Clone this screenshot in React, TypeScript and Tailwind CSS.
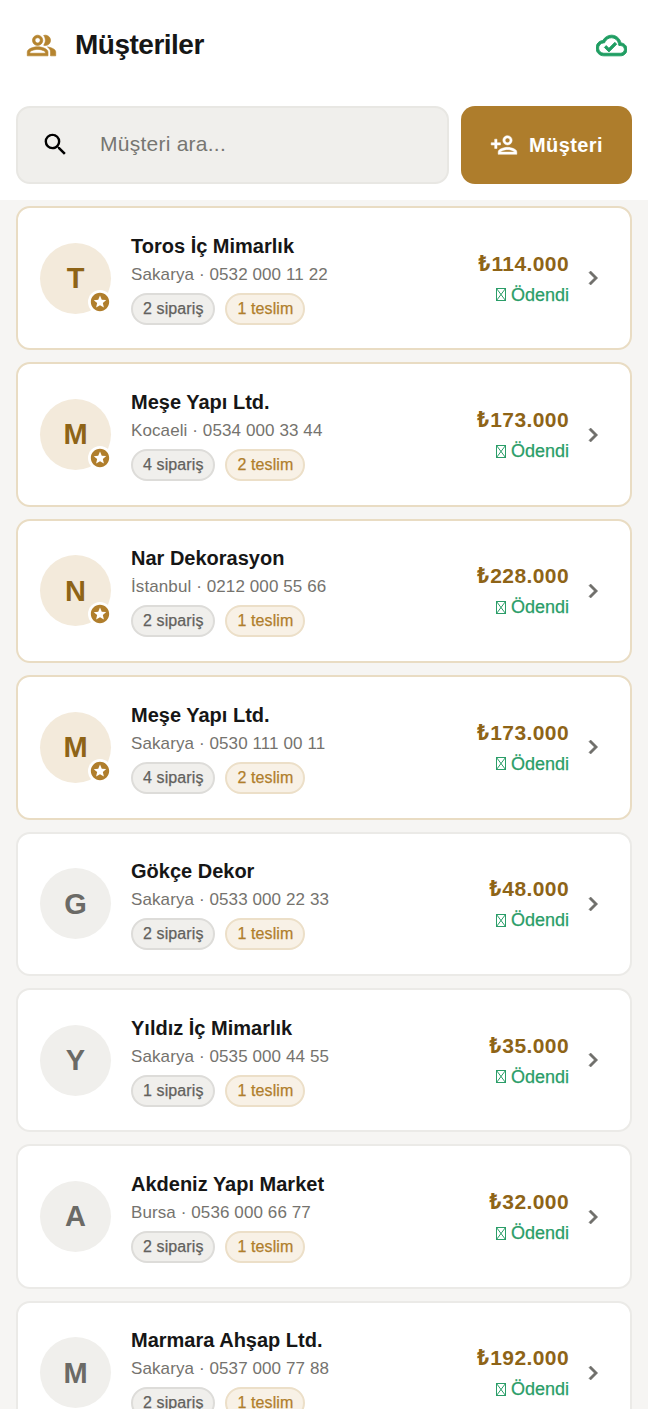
import React from "react";
import { MdSearch, MdStars } from "react-icons/md";

const rows = [
  ["T", "Toros İç Mimarlık", "Sakarya · 0532 000 11 22", "2 sipariş", "1 teslim", "₺114.000", true],
  ["M", "Meşe Yapı Ltd.", "Kocaeli · 0534 000 33 44", "4 sipariş", "2 teslim", "₺173.000", true],
  ["N", "Nar Dekorasyon", "İstanbul · 0212 000 55 66", "2 sipariş", "1 teslim", "₺228.000", true],
  ["M", "Meşe Yapı Ltd.", "Sakarya · 0530 111 00 11", "4 sipariş", "2 teslim", "₺173.000", true],
  ["G", "Gökçe Dekor", "Sakarya · 0533 000 22 33", "2 sipariş", "1 teslim", "₺48.000", false],
  ["Y", "Yıldız İç Mimarlık", "Sakarya · 0535 000 44 55", "1 sipariş", "1 teslim", "₺35.000", false],
  ["A", "Akdeniz Yapı Market", "Bursa · 0536 000 66 77", "2 sipariş", "1 teslim", "₺32.000", false],
  ["M", "Marmara Ahşap Ltd.", "Sakarya · 0537 000 77 88", "2 sipariş", "1 teslim", "₺192.000", false],
] as const;

function Tofu() {
  return (
    <svg width="10" height="13" viewBox="0 0 10 13" fill="none" stroke="currentColor" strokeWidth="1" className="shrink-0">
      <rect x="0.5" y="0.5" width="9" height="12" />
      <path d="M0.5 0.5L9.5 12.5M9.5 0.5L0.5 12.5" />
    </svg>
  );
}

function PeopleIcon() {
  return (
    <svg width="31" height="31" viewBox="0 0 24 24" fill="currentColor" stroke="currentColor" strokeWidth="0.5" className="shrink-0 text-[#b5842f]">
      <path d="M16.67 13.13C18.04 14.06 19 15.32 19 17v3h4v-3c0-2.18-3.57-3.47-6.33-3.87z" />
      <path d="M15 12c2.21 0 4-1.79 4-4s-1.79-4-4-4c-.47 0-.91.1-1.33.24C14.5 5.27 15 6.58 15 8s-.5 2.73-1.33 3.76c.42.14.86.24 1.33.24z" />
      <path d="M9 12c2.21 0 4-1.79 4-4s-1.79-4-4-4-4 1.79-4 4 1.79 4 4 4zm0-6c1.1 0 2 .9 2 2s-.9 2-2 2-2-.9-2-2 .9-2 2-2z" />
      <path d="M9 13c-2.67 0-8 1.34-8 4v3h16v-3c0-2.66-5.33-4-8-4zm6 5H3v-.99C3.2 16.29 6.3 15 9 15s5.8 1.29 6 2v1z" />
    </svg>
  );
}

function CloudIcon() {
  return (
    <svg width="31" height="31" viewBox="0 0 24 24" fill="currentColor" stroke="currentColor" strokeWidth="0.7" className="shrink-0 text-[#1f9d62]">
      <path d="M19.35 10.04C18.67 6.59 15.64 4 12 4 9.11 4 6.6 5.64 5.35 8.04 2.34 8.36 0 10.91 0 14c0 3.31 2.69 6 6 6h13c2.76 0 5-2.24 5-5 0-2.64-2.05-4.78-4.65-4.96zM19 18H6c-2.21 0-4-1.79-4-4 0-2.05 1.53-3.76 3.56-3.97l1.07-.11.5-.95C8.08 7.14 9.94 6 12 6c2.62 0 4.88 1.86 5.39 4.43l.3 1.5 1.53.11c1.56.1 2.78 1.41 2.78 2.96 0 1.65-1.35 3-3 3zM10 14.17l-2.09-2.09L6.5 13.5 10 17l6.01-6.01-1.41-1.41z" />
    </svg>
  );
}

function PersonAddIcon() {
  return (
    <svg width="28" height="28" viewBox="0 0 24 24" fill="currentColor" stroke="currentColor" strokeWidth="0.4" className="shrink-0">
      <path d="M15 6c1.1 0 2 .9 2 2s-.9 2-2 2-2-.9-2-2 .9-2 2-2m0 10c2.7 0 5.8 1.29 6 2H9c.23-.72 3.31-2 6-2M15 4c-2.21 0-4 1.79-4 4s1.79 4 4 4 4-1.79 4-4-1.79-4-4-4zm0 10c-2.67 0-8 1.34-8 4v2h16v-2c0-2.66-5.33-4-8-4z" />
      <path d="M6 10V7H4v3H1v2h3v3h2v-3h3v-2H6z" />
    </svg>
  );
}

function Chevron() {
  return (
    <svg width="28" height="28" viewBox="0 0 24 24" fill="currentColor" stroke="currentColor" strokeWidth="0.5" className="-mr-[28px] ml-[10px] shrink-0 text-[#6f6e6a]">
      <path d="M10 6 8.59 7.41 13.17 12l-4.58 4.59L10 18l6-6z" />
    </svg>
  );
}

function Card({ r }: { r: (typeof rows)[number] }) {
  const [letter, name, sub, orders, deliv, amount, vip] = r;
  return (
    <div className={`flex h-[144.4px] shrink-0 items-center rounded-[14px] border-2 bg-white pl-[22px] pr-[51px] ${vip ? "border-[#e9dcc3]" : "border-[#ebeae7]"}`}>
      <div className={`relative flex h-[71px] w-[71px] shrink-0 items-center justify-center rounded-full pt-[1px] text-[29px] font-bold ${vip ? "bg-[#f3eadb] text-[#8e6417]" : "bg-[#f0efec] text-[#6b6a66]"}`}>
        {letter}
        {vip && (
          <span className="absolute -right-[1px] bottom-0 flex h-[24px] w-[24px] items-center justify-center rounded-full bg-white">
            <MdStars size={22} className="text-[#b07e2c]" />
          </span>
        )}
      </div>
      <div className="ml-[20px] flex min-w-0 flex-1 flex-col items-start">
        <div className="text-[20px] leading-[28px] font-bold text-[#161616]">{name}</div>
        <div className="text-[17px] leading-[30px] tracking-[0.1px] text-[#75736e]">{sub}</div>
        <div className="mt-[3px] flex gap-[10px]">
          <span className="flex h-[32px] items-center rounded-full border-2 border-[#dddcd9] bg-[#f0efec] px-[10px] text-[16px] tracking-[0.1px] text-[#62615d] [-webkit-text-stroke:0.25px]">{orders}</span>
          <span className="flex h-[32px] items-center rounded-full border-2 border-[#ecdfc8] bg-[#f8f1e6] px-[10px] text-[16px] tracking-[0.1px] text-[#b07e2c] [-webkit-text-stroke:0.25px]">{deliv}</span>
        </div>
      </div>
      <div className="flex flex-col items-end">
        <div className="text-[21px] leading-[28px] font-bold tracking-[0.4px] text-[#8e6417]">{amount}</div>
        <div className="mt-[5px] flex items-center gap-[5px] text-[18px] leading-[24px] text-[#2a9d68] [-webkit-text-stroke:0.25px]">
          <Tofu />
          Ödendi
        </div>
      </div>
      <Chevron />
    </div>
  );
}

export default function App() {
  return (
    <div className="flex h-[1409px] w-[648px] flex-col overflow-hidden bg-[#f6f5f3] font-['Liberation_Sans','Inter',sans-serif]">
      <div className="shrink-0 bg-white px-4 pb-[16px]">
        <div className="flex h-[90px] items-center justify-between pl-[10px] pr-[5px]">
          <div className="flex items-center gap-[18px]">
            <PeopleIcon />
            <div className="text-[28px] font-bold tracking-[-0.5px] text-[#161616]">Müşteriler</div>
          </div>
          <CloudIcon />
        </div>
        <div className="flex gap-[12px] pt-[16px]">
          <div className="flex h-[78px] flex-1 items-center rounded-[14px] border-2 border-[#e8e7e3] bg-[#f0efec] pb-[2px] pl-[23px]">
            <MdSearch size={29} className="text-black" />
            <span className="ml-[30px] text-[21px] tracking-[0.25px] text-[#777671]">Müşteri ara...</span>
          </div>
          <div className="flex h-[78px] w-[171px] items-center justify-center gap-[11px] rounded-[14px] bg-[#ae7d2c] text-[20px] font-bold tracking-[0.4px] text-white">
            <PersonAddIcon />
            Müşteri
          </div>
        </div>
      </div>
      <div className="flex flex-col gap-[12px] px-4 pt-[6px]">
        {rows.map((r, i) => (
          <Card key={i} r={r} />
        ))}
      </div>
    </div>
  );
}
